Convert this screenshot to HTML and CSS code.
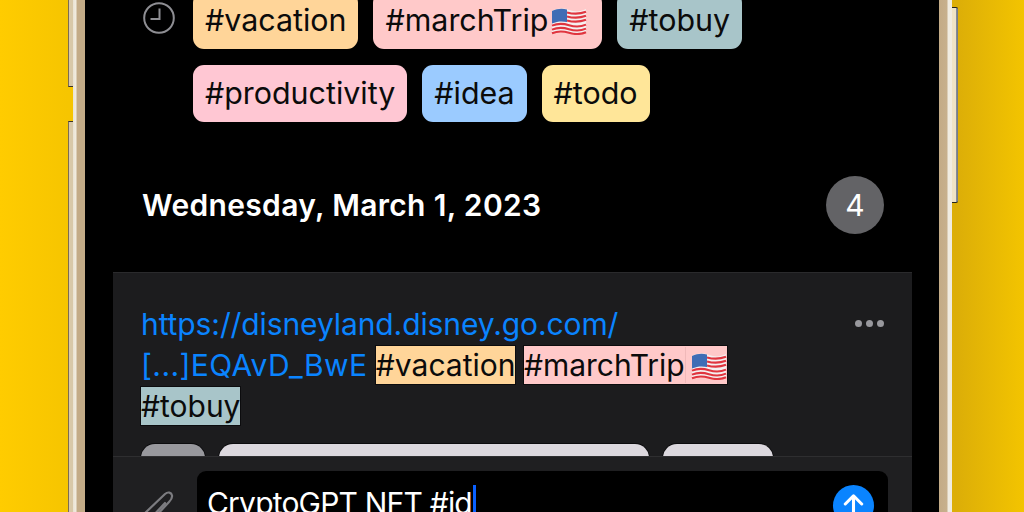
FILE: index.html
```html
<!DOCTYPE html>
<html lang="en">
<head>
<meta charset="utf-8">
<title>Notes</title>
<link rel="stylesheet" href="styles.css">
</head>
<body>
<svg class="defs" width="0" height="0" aria-hidden="true">
  <defs>
    <symbol id="flag" viewBox="0 0 36 28">
      <path d="M1 4c6-3 11-3 17-1s11 2 17-1v23c-6 3-11 3-17 1S7 24 1 27z" fill="#f4f0f0"/>
      <g fill="none" stroke="#e0353f" stroke-width="2.100">
        <path d="M16 5.400c7 2 12 2 19-.6"/>
        <path d="M16 9.400c7 2 12 2 19-.6"/>
        <path d="M16 13.400c7 2 12 2 19-.6"/>
        <path d="M1 18.600c6-2.400 11-2.200 17-.4s11 2 17-.6"/>
        <path d="M1 22.600c6-2.400 11-2.200 17-.4s11 2 17-.6"/>
        <path d="M1 26.200c6-2.400 11-2.200 17-.4s11 2 17-.6"/>
      </g>
      <path d="M1 4c5-2.500 10-2.800 15-1.600V15c-5-1-10-.7-15 1.500z" fill="#3f6db5"/>
    </symbol>
  </defs>
</svg>
<div class="phone">
  <span class="button button-left-top"></span>
  <span class="button button-left-bottom"></span>
  <span class="button button-right"></span>
  <main class="screen">
    <section class="recent">
      <svg class="clock" viewBox="0 0 32 32" aria-hidden="true">
        <circle cx="16" cy="16" r="14.800" fill="none" stroke="#8e8e93" stroke-width="2"/>
        <path d="M16.500 6.500V17H7.500" fill="none" stroke="#8e8e93" stroke-width="2"/>
      </svg>
      <div class="tags">
        <span class="tag tag-orange">#vacation</span>
        <span class="tag tag-pink">#marchTrip<svg class="flag"><use href="#flag"/></svg></span>
        <span class="tag tag-teal">#tobuy</span>
        <span class="tag tag-rose">#productivity</span>
        <span class="tag tag-blue">#idea</span>
        <span class="tag tag-yellow">#todo</span>
      </div>
    </section>
    <header class="day">
      <h2 class="day-title">Wednesday, March 1, 2023</h2>
      <span class="day-count">4</span>
    </header>
    <article class="card">
      <div class="note-head">
        <p class="note-text">
          <a class="link link-top">https://disneyland.disney.go.com/</a><br>
          <a class="link link-rest">[...]EQAvD_BwE</a>
          <mark class="hl hl-orange">#vacation</mark>
          <mark class="hl hl-pink">#marchTrip<span class="hl-flag"><svg class="flag"><use href="#flag"/></svg></span></mark><br>
          <mark class="hl hl-teal">#tobuy</mark>
        </p>
        <span class="more" aria-label="More"><i></i><i></i><i></i></span>
      </div>
      <div class="thumbs">
        <span class="thumb thumb-gray"></span>
        <span class="thumb thumb-wide"></span>
        <span class="thumb thumb-small"></span>
      </div>
    </article>
    <footer class="composer">
      <svg class="clip" viewBox="0 0 36 36" aria-hidden="true">
        <path d="M3 27 25 6c3-2.600 6.500-1.600 7 1.400s-1 4.600-3 6.600L16 28M11 30 25 15" fill="none" stroke="#7c7c80" stroke-width="2.200" stroke-linecap="round"/>
      </svg>
      <div class="input">
        <span class="input-text">CryptoGPT NFT #id</span><span class="caret"></span>
        <span class="send">
          <svg viewBox="0 0 40 40" aria-hidden="true"><path d="M20 31V11M12 18.500 20 10.500l8 8" fill="none" stroke="#fff" stroke-width="3" stroke-linecap="round" stroke-linejoin="round"/></svg>
        </span>
      </div>
    </footer>
  </main>
</div>
</body>
</html>
```
FILE: styles.css
```css
* { box-sizing: border-box; }
html, body { margin: 0; height: 512px; overflow: hidden; }
body {
  display: flex;
  padding-left: 73px;
  font-family: Inter, "Liberation Sans", sans-serif;
  background: linear-gradient(to right, #ffcc00 0, #f6c500 68px, #dcae08 957px, #f3c400 1024px);
}
.defs { position: absolute; }
.phone {
  position: relative;
  display: flex;
  width: 879px;
  height: 512px;
  padding: 0 13px 0 12px;
  background: linear-gradient(to right,
    #e9e2d2 0, #f1ece0 3px, #c3ab87 4px, #c3ab87 12px,
    #000 12px, #000 866px,
    #c3ab87 866px, #c7b08d 874px, #f0ece2 875px, #f0ece2 879px);
}
.button { position: absolute; display: block; }
.button-left-top, .button-left-bottom {
  left: -5px;
  width: 5px;
  background: #d8c8a8;
  border-left: 1px solid #7c6c52;
}
.button-left-top { top: 0; height: 87px; border-bottom: 1px solid #3c3428; }
.button-left-bottom { top: 121px; height: 391px; border-top: 1px solid #3c3428; }
.button-right {
  left: 879px;
  top: 7px;
  width: 6px;
  height: 196px;
  background: linear-gradient(to right, #efe3c6 0, #efe3c6 65%, #8c93a0 65%, #70767f 100%);
  border-top: 1px solid #23231f;
  border-bottom: 1px solid #23231f;
  border-radius: 0 2px 2px 0;
}
.screen {
  display: flex;
  flex: 1;
  flex-direction: column;
  min-width: 0;
  background: #000;
}
.recent {
  display: flex;
  flex: none;
  height: 146px;
  margin-top: -8px;
  padding-left: 58px;
}
.clock { flex: none; width: 32px; height: 32px; margin-top: 10px; }
.tags {
  display: flex;
  flex-wrap: wrap;
  align-content: flex-start;
  gap: 16px 15px;
  width: 600px;
  margin-left: 18px;
}
.tag {
  display: flex;
  align-items: center;
  height: 57px;
  padding: 0 12px;
  border-radius: 11px;
  color: #0b0b0b;
  font-size: 30.400px;
  line-height: 1;
  white-space: nowrap;
}
.tag-orange { background: #ffd599; }
.tag-pink { background: #ffc9c9; padding-right: 15px; }
.tag-teal { background: #a8c5c9; }
.tag-rose { background: #ffc7d3; }
.tag-blue { background: #9bcbff; }
.tag-yellow { background: #ffe699; }
.flag { display: inline-block; flex: none; width: 36px; height: 28px; margin-left: 3px; vertical-align: -4px; }
.day {
  display: flex;
  flex: none;
  align-items: center;
  justify-content: space-between;
  height: 134px;
  padding: 0 55px 0 57px;
}
.day-title {
  margin: 0;
  color: #fff;
  font-size: 30px;
  font-weight: 600;
  line-height: 1;
  letter-spacing: .33px;
}
.day-count {
  display: flex;
  align-items: center;
  justify-content: center;
  width: 58px;
  height: 58px;
  border-radius: 50%;
  background: #636366;
  color: #fff;
  font-size: 30px;
}
.card {
  display: flex;
  flex: none;
  flex-direction: column;
  height: 184px;
  margin: 0 27px 0 28px;
  padding: 31px 28px 0 28px;
  overflow: hidden;
  background: #1c1c1e;
  border-top: 1px solid #2a2a2c;
}
.note-head { display: flex; justify-content: space-between; }
.note-text { margin: 0; font-size: 30px; line-height: 41px; color: #fff; }
.link { color: #0a84ff; }
.link-top { letter-spacing: -.1px; }
.link-rest { letter-spacing: .4px; }
.hl { padding: 1px 0; color: #0b0b0b; box-shadow: 0 0 0 1px #0c0c0e; }
.hl-orange { background: #ffd599; }
.hl-pink { background: #ffc9c9; }
.hl-teal { background: #a8c5c9; }
.hl-flag { padding-left: 2px; border-left: 1px solid #f0b9b9; }
.more { display: flex; gap: 4px; margin-top: 16px; height: 7px; }
.more i { display: block; width: 7px; height: 7px; border-radius: 50%; background: #98989d; }
.thumbs { display: flex; gap: 14px; margin-top: 17px; }
.thumb { display: block; height: 40px; border-radius: 14px; box-shadow: 0 0 0 1px #0c0c0e; }
.thumb-gray { width: 64px; background: #98989d; }
.thumb-wide { width: 430px; background: #dcd8de; }
.thumb-small { width: 110px; background: #dcd8de; }
.composer {
  display: flex;
  flex: none;
  height: 80px;
  margin: 0 27px 0 28px;
  padding: 14px 24px 0 27px;
  background: #1f1f21;
  border-top: 1px solid #2e2e30;
}
.clip { flex: none; width: 36px; height: 36px; margin-top: 17px; }
.input {
  display: flex;
  flex: 1;
  align-items: flex-start;
  height: 80px;
  margin-left: 21px;
  padding: 14px 14px 0 10px;
  background: #000;
  border-radius: 9px;
  color: #fff;
  font-size: 30px;
  line-height: 36px;
}
.input-text { letter-spacing: -.8px; }
.caret { display: block; width: 3px; height: 36px; margin-left: 1px; background: #0a60ff; }
.send {
  display: block;
  width: 41px;
  height: 41px;
  margin-left: auto;
  border-radius: 50%;
  background: #0a84ff;
}
.send svg { display: block; width: 41px; height: 41px; }
```
